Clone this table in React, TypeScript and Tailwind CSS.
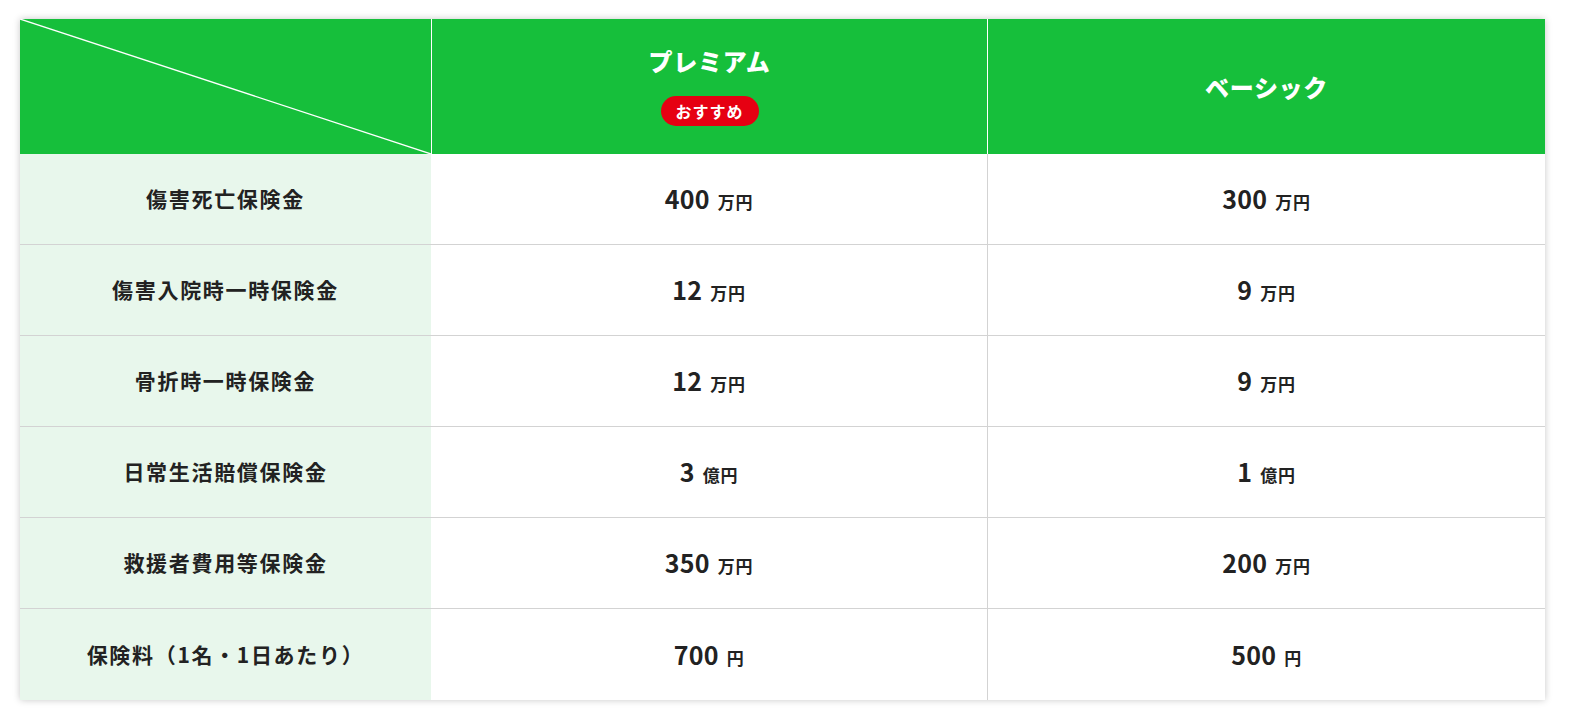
const rows = [
  { label: '傷害死亡保険金', premium: ['400', '万円'], basic: ['300', '万円'] },
  { label: '傷害入院時一時保険金', premium: ['12', '万円'], basic: ['9', '万円'] },
  { label: '骨折時一時保険金', premium: ['12', '万円'], basic: ['9', '万円'] },
  { label: '日常生活賠償保険金', premium: ['3', '億円'], basic: ['1', '億円'] },
  { label: '救援者費用等保険金', premium: ['350', '万円'], basic: ['200', '万円'] },
  { label: '保険料（1名・1日あたり）', premium: ['700', '円'], basic: ['500', '円'] },
];

const Amount = ({ value }: { value: string[] }) => (
  <span className="text-[#222] font-bold">
    <span className="text-[25px] tracking-[0.01em]">{value[0]}</span>
    <span className="text-[17px] tracking-[0.04em] ml-[8px]">{value[1]}</span>
  </span>
);

export default function App() {
  return (
    <div
      className="min-h-screen bg-white pt-[19px] pl-[20px]"
      style={{ fontFamily: '"Noto Sans CJK JP", "Noto Sans", sans-serif' }}
    >
      <div className="w-[1525px] shadow-[0_0_7px_rgba(0,0,0,0.22)]">
        {/* Header */}
        <div className="grid grid-cols-[411px_557px_557px] h-[135px] bg-[#16bf3b]">
          <div className="relative">
            <svg className="absolute inset-0 w-full h-full" viewBox="0 0 411 135" preserveAspectRatio="none">
              <line x1="0" y1="0" x2="411" y2="135" stroke="#ffffff" strokeWidth="1.3" />
            </svg>
          </div>
          <div className="border-l border-r border-white flex flex-col items-center justify-center">
            <div className="text-white font-black text-[24px] tracking-[0.03em] leading-none mt-[2px]">プレミアム</div>
            <div className="mt-[23px] w-[98px] h-[30px] rounded-full bg-[#e60012] text-white font-bold text-[16px] tracking-[0.06em] flex items-center justify-center">
              おすすめ
            </div>
          </div>
          <div className="flex items-center justify-center">
            <div className="text-white font-black text-[24px] tracking-[0.03em] leading-none">ベーシック</div>
          </div>
        </div>

        {/* Body */}
        {rows.map((r, i) => {
          const last = i === rows.length - 1;
          return (
            <div
              key={r.label}
              className={`grid grid-cols-[411px_557px_557px] h-[91px] ${last ? '' : 'border-b border-[#d3d3d3]'}`}
            >
              <div className="bg-[#e8f7ec] flex items-center justify-center text-[#222] font-bold text-[21px] tracking-[0.08em]">
                {r.label}
              </div>
              <div className="bg-white border-r border-[#d3d3d3] flex items-center justify-center">
                <Amount value={r.premium} />
              </div>
              <div className="bg-white flex items-center justify-center">
                <Amount value={r.basic} />
              </div>
            </div>
          );
        })}
      </div>
    </div>
  );
}
